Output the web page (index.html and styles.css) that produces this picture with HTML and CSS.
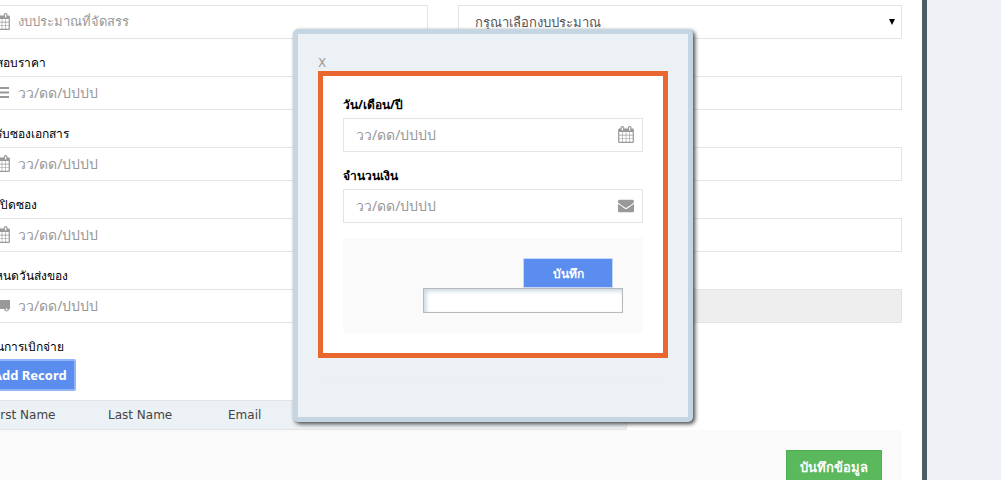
FILE: index.html
```html
<!DOCTYPE html>
<html lang="th">
<head>
    <meta charset="UTF-8">
    <meta name="viewport" content="width=device-width, initial-scale=1.0">
    <title>บันทึกข้อมูล</title>
    <link rel="stylesheet" href="styles.css">
</head>
<body>

<svg class="sprite" aria-hidden="true">
    <symbol id="icon-calendar" viewBox="0 0 1664 1792">
        <path d="M128 1664h288v-288h-288v288zm352 0h320v-288h-320v288zm-352-352h288v-320h-288v320zm352 0h320v-320h-320v320zm-352-384h288v-288h-288v288zm736 736h320v-288h-320v288zm-384-736h320v-288h-320v288zm768 736h288v-288h-288v288zm-384-352h320v-320h-320v320zm-352-864v-288q0-13-9.500-22.500t-22.500-9.500h-64q-13 0-22.500 9.500t-9.500 22.500v288q0 13 9.500 22.500t22.500 9.500h64q13 0 22.500-9.500t9.500-22.500zm736 864h288v-320h-288v320zm-384-384h320v-288h-320v288zm384 0h288v-288h-288v288zm32-480v-288q0-13-9.500-22.500t-22.500-9.500h-64q-13 0-22.500 9.500t-9.500 22.500v288q0 13 9.500 22.500t22.500 9.500h64q13 0 22.500-9.500t9.500-22.500zm384-64v1280q0 52-38 90t-90 38h-1408q-52 0-90-38t-38-90v-1280q0-52 38-90t90-38h128v-96q0-66 47-113t113-47h64q66 0 113 47t47 113v96h384v-96q0-66 47-113t113-47h64q66 0 113 47t47 113v96h128q52 0 90 38t38 90z"/>
    </symbol>
    <symbol id="icon-envelope" viewBox="0 0 1792 1792">
        <path d="M1792 710v794q0 66-47 113t-113 47h-1472q-66 0-113-47t-47-113v-794q44 49 101 87 362 246 497 345 57 42 92.500 65.500t94.500 48 110 24.500h2q51 0 110-24.500t94.500-48 92.500-65.500q170-123 498-345 57-39 100-87zm0-294q0 79-49 151t-122 123q-376 261-468 325-10 7-42.500 31t-54 38.500-52 32.500-57.500 27-50 9h-2q-23 0-50-9t-57.500-27-52-32.500-54-38.500-42.500-31q-91-64-262-182.500t-205-142.500q-62-42-117-115.500t-55-136.500q0-78 41.500-130t118.500-52h1472q65 0 112.500 47t47.500 113z"/>
    </symbol>
    <symbol id="icon-bars" viewBox="0 0 16 17">
        <path d="M1 3h14v2H1zM1 7.600h14v2H1zM1 12h14v2H1z"/>
    </symbol>
    <symbol id="icon-truck" viewBox="0 0 16 17">
        <path d="M6 3h10v9h-1a2.400 2.400 0 0 1-4.800 0H6a2.400 2.400 0 0 1-4.800 0H0V8l2-3h4z"/>
        <circle cx="12.600" cy="12.400" r="1" fill="#fff"/>
    </symbol>
</svg>

<div class="panel">
    <form class="form">
        <div class="row">
            <div class="field">
                <div class="control">
                    <svg class="icon"><use href="#icon-calendar"/></svg>
                    <input type="text" class="budget" aria-label="งบประมาณที่จัดสรร" placeholder="งบประมาณที่จัดสรร">
                </div>
            </div>
            <div class="field">
                <div class="control select">
                    <select class="budget" aria-label="งบประมาณ">
                        <option>กรุณาเลือกงบประมาณ</option>
                    </select>
                </div>
            </div>
        </div>
        <div class="row">
            <div class="field">
                <label for="priceDate">วันสอบราคา</label>
                <div class="control">
                    <svg class="icon"><use href="#icon-bars"/></svg>
                    <input type="text" id="priceDate" placeholder="วว/ดด/ปปปป">
                </div>
            </div>
            <div class="field">
                <div class="control"><input type="text" aria-label="ราคา"></div>
            </div>
        </div>
        <div class="row">
            <div class="field">
                <label for="docDate">วันรับซองเอกสาร</label>
                <div class="control">
                    <svg class="icon"><use href="#icon-calendar"/></svg>
                    <input type="text" id="docDate" placeholder="วว/ดด/ปปปป">
                </div>
            </div>
            <div class="field">
                <div class="control"><input type="text" aria-label="เอกสาร"></div>
            </div>
        </div>
        <div class="row">
            <div class="field">
                <label for="openDate">วันเปิดซอง</label>
                <div class="control">
                    <svg class="icon"><use href="#icon-calendar"/></svg>
                    <input type="text" id="openDate" placeholder="วว/ดด/ปปปป">
                </div>
            </div>
            <div class="field">
                <div class="control"><input type="text" aria-label="ซอง"></div>
            </div>
        </div>
        <div class="row">
            <div class="field">
                <label for="sendDate">กำหนดวันส่งของ</label>
                <div class="control">
                    <svg class="icon"><use href="#icon-truck"/></svg>
                    <input type="text" id="sendDate" placeholder="วว/ดด/ปปปป">
                </div>
            </div>
            <div class="field">
                <div class="control disabled"><input type="text" aria-label="ส่งของ" disabled></div>
            </div>
        </div>

        <div class="records">
            <p class="caption">แผนการเบิกจ่าย</p>
            <button type="button" class="btn-add">Add Record</button>
            <table>
                <thead>
                    <tr><th>First Name</th><th>Last Name</th><th>Email</th><th></th></tr>
                </thead>
            </table>
        </div>

        <div class="form-footer">
            <button type="submit" class="btn-save">บันทึกข้อมูล</button>
        </div>
    </form>
</div>

<div class="modal" role="dialog" aria-label="บันทึก">
    <a href="#" class="close">X</a>
    <form class="modal-box">
        <div class="field">
            <label for="payDate">วัน/เดือน/ปี</label>
            <div class="control">
                <input type="text" id="payDate" placeholder="วว/ดด/ปปปป">
                <svg class="icon"><use href="#icon-calendar"/></svg>
            </div>
        </div>
        <div class="field">
            <label for="payAmount">จำนวนเงิน</label>
            <div class="control">
                <input type="text" id="payAmount" placeholder="วว/ดด/ปปปป">
                <svg class="icon"><use href="#icon-envelope"/></svg>
            </div>
        </div>
        <div class="modal-footer">
            <button type="button" class="btn-ok">บันทึก</button>
            <input type="text" class="plain" aria-label="ผลลัพธ์">
        </div>
    </form>
    <hr>
</div>

</body>
</html>
```
FILE: styles.css
```css
:root {
    --page-bg: #f0f1f6;
    --panel-edge: #4b5e68;
    --line: #e4e4e4;
    --muted: #999;
    --blue: #5b8def;
    --soft: #ecf1f5;
}

* {
    box-sizing: border-box;
}

body {
    margin: 0;
    min-height: 100vh;
    background-color: var(--page-bg);
    font-family: "Noto Sans", Tahoma, "DejaVu Sans", sans-serif;
    font-size: 12px;
    color: #000;
    overflow: hidden;
}

.sprite {
    display: none;
}

.panel {
    margin: 0 74px 0 -16px;
    padding: 5px 20px 0 0;
    height: 100vh;
    background-color: #fff;
    border-right: 5px solid var(--panel-edge);
    overflow: hidden;
}

.row {
    display: grid;
    grid-template-columns: 1fr 1fr;
    gap: 30px;
    align-items: end;
    margin-bottom: 15px;
}

label,
.caption {
    display: block;
    height: 22px;
    margin: 0;
    line-height: 18px;
    white-space: nowrap;
}

.form label,
.caption {
    margin-left: -3px;
}

.caption {
    height: 21px;
}

.control {
    display: flex;
    align-items: center;
    height: 34px;
    padding: 0 9px 2px;
    gap: 8px;
    background-color: #fff;
    border: 1px solid var(--line);
}

.control input,
.control select {
    flex: 1;
    min-width: 0;
    padding: 0;
    border: none;
    outline: none;
    background: none;
    font-family: inherit;
    font-size: 14px;
    color: #555;
}

.control .budget {
    font-size: 13px;
}

.control input::placeholder {
    color: var(--muted);
    opacity: 1;
}

.control.disabled {
    background-color: #eee;
}

.control.select {
    padding: 0 6px 0 16px;
}

.control select {
    appearance: none;
    height: 32px;
}

.select::after {
    content: "";
    border: 3px solid transparent;
    border-top: 6px solid #000;
    border-bottom: none;
}

.icon {
    flex: none;
    width: 16px;
    height: 17px;
    fill: var(--muted);
}

.btn-add {
    display: block;
    height: 32px;
    padding: 0 7px;
    border: 2px solid #8fb4fa;
    border-radius: 2px;
    background-color: var(--blue);
    color: #fff;
    font-family: inherit;
    font-size: 13px;
    font-weight: bold;
}

table {
    width: 70%;
    margin-top: 9px;
    border-collapse: separate;
    border-spacing: 0;
    table-layout: fixed;
    background-color: var(--soft);
    border: solid var(--line);
    border-width: 1px 1px 1px 0;
}

th {
    width: 120px;
    height: 28px;
    padding: 0 4px;
    font-family: "DejaVu Sans", Verdana, sans-serif;
    font-size: 12px;
    font-weight: normal;
    text-align: left;
    color: #444;
}

th:first-child {
    padding-left: 7px;
}

th:last-child {
    width: auto;
}

.form-footer {
    display: flex;
    justify-content: flex-end;
    padding: 20px;
    background-color: #fafafa;
}

.btn-save {
    height: 34px;
    padding: 0 13px;
    border: 1px solid #4cae4c;
    background-color: #5cb85c;
    color: #fff;
    font-family: inherit;
    font-size: 13px;
    font-weight: bold;
}

/* popup window */
.modal {
    position: absolute;
    top: 29px;
    left: 293px;
    width: 400px;
    padding: 20px;
    background-color: var(--soft);
    border: 5px solid #c5d6e2;
    border-radius: 5px;
    box-shadow: 2px 2px 4px #444;
}

.close {
    display: block;
    height: 17px;
    font-family: "DejaVu Sans", Verdana, sans-serif;
    line-height: 18px;
    color: var(--muted);
    text-decoration: none;
}

.modal-box {
    padding: 20px;
    background-color: #fff;
    border: 5px solid #e9672e;
}

.modal-box .field {
    margin-bottom: 15px;
}

.modal-box label {
    font-weight: bold;
}

.modal-box .control {
    padding: 0 8px 2px 12px;
}

.modal-footer {
    display: flex;
    flex-direction: column;
    align-items: flex-end;
    padding: 20px;
    background-color: #fafafa;
    border-radius: 0 0 4px 4px;
}

.btn-ok {
    width: 90px;
    height: 30px;
    margin-right: 10px;
    border: 1px solid #c6d8fa;
    background-color: var(--blue);
    color: #fff;
    font-family: inherit;
    font-size: 12px;
    font-weight: bold;
}

.plain {
    width: 200px;
    height: 25px;
    border: 1px solid #b8b8b8;
    box-shadow: inset 2px 2px 4px #c5d6e2;
}

hr {
    margin: 20px 0 18px;
    border: none;
    border-top: 1px solid #eee;
}
```
